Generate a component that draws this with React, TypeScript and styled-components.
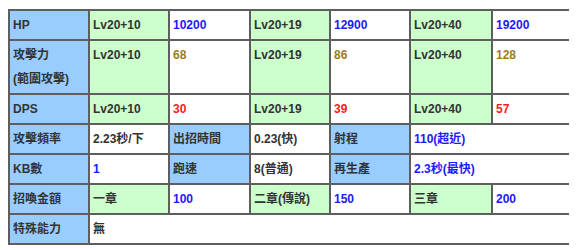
import styled, { createGlobalStyle } from "styled-components";

const GlobalStyle = createGlobalStyle`
  body {
    margin: 8px;
    background: #ffffff;
    font-family: "Liberation Sans", "Noto Sans CJK TC", sans-serif;
  }
`;

type Tone = "label" | "level" | "plain";
type Ink = "dark" | "blue" | "gold" | "red";

const backgrounds: Record<Tone, string> = {
  label: "#99ccff",
  level: "#ccffcc",
  plain: "#ffffff",
};

const inks: Record<Ink, string> = {
  dark: "#333333",
  blue: "#1a1aff",
  gold: "#9c7d1c",
  red: "#ff1a1a",
};

const rows: { tone: Tone; ink: Ink; text: string; span?: number }[][] = [
  [
    { tone: "label", ink: "dark", text: "HP" },
    { tone: "level", ink: "dark", text: "Lv20+10" },
    { tone: "plain", ink: "blue", text: "10200" },
    { tone: "level", ink: "dark", text: "Lv20+19" },
    { tone: "plain", ink: "blue", text: "12900" },
    { tone: "level", ink: "dark", text: "Lv20+40" },
    { tone: "plain", ink: "blue", text: "19200" },
  ],
  [
    { tone: "label", ink: "dark", text: "攻擊力\n(範圍攻擊)" },
    { tone: "level", ink: "dark", text: "Lv20+10" },
    { tone: "plain", ink: "gold", text: "68" },
    { tone: "level", ink: "dark", text: "Lv20+19" },
    { tone: "plain", ink: "gold", text: "86" },
    { tone: "level", ink: "dark", text: "Lv20+40" },
    { tone: "plain", ink: "gold", text: "128" },
  ],
  [
    { tone: "label", ink: "dark", text: "DPS" },
    { tone: "level", ink: "dark", text: "Lv20+10" },
    { tone: "plain", ink: "red", text: "30" },
    { tone: "level", ink: "dark", text: "Lv20+19" },
    { tone: "plain", ink: "red", text: "39" },
    { tone: "level", ink: "dark", text: "Lv20+40" },
    { tone: "plain", ink: "red", text: "57" },
  ],
  [
    { tone: "label", ink: "dark", text: "攻擊頻率" },
    { tone: "plain", ink: "dark", text: "2.23秒/下" },
    { tone: "label", ink: "dark", text: "出招時間" },
    { tone: "plain", ink: "dark", text: "0.23(快)" },
    { tone: "label", ink: "dark", text: "射程" },
    { tone: "plain", ink: "blue", text: "110(超近)", span: 2 },
  ],
  [
    { tone: "label", ink: "dark", text: "KB數" },
    { tone: "plain", ink: "blue", text: "1" },
    { tone: "label", ink: "dark", text: "跑速" },
    { tone: "plain", ink: "dark", text: "8(普通)" },
    { tone: "label", ink: "dark", text: "再生產" },
    { tone: "plain", ink: "blue", text: "2.3秒(最快)", span: 2 },
  ],
  [
    { tone: "label", ink: "dark", text: "招喚金額" },
    { tone: "level", ink: "dark", text: "一章" },
    { tone: "plain", ink: "blue", text: "100" },
    { tone: "level", ink: "dark", text: "二章(傳說)" },
    { tone: "plain", ink: "blue", text: "150" },
    { tone: "level", ink: "dark", text: "三章" },
    { tone: "plain", ink: "blue", text: "200" },
  ],
  [
    { tone: "label", ink: "dark", text: "特殊能力" },
    { tone: "plain", ink: "dark", text: "無", span: 6 },
  ],
];

const widths = [80, 80, 81, 80, 80, 82, 81];

const App = () => {
  return (
    <>
      <GlobalStyle />
      <StatsTable>
        <colgroup>
          {widths.map((w, i) => (
            <col key={i} style={{ width: w }} />
          ))}
        </colgroup>
        <tbody>
          {rows.map((row, r) => (
            <tr key={r}>
              {row.map((cell, c) => (
                <Cell key={c} $tone={cell.tone} $ink={cell.ink} colSpan={cell.span}>
                  {cell.text.split("\n").map((line, l) => (
                    <Line key={l}>{line}</Line>
                  ))}
                </Cell>
              ))}
            </tr>
          ))}
        </tbody>
      </StatsTable>
    </>
  );
};

const StatsTable = styled.table`
  width: 564px;
  margin-top: 1px;
  table-layout: fixed;
  border-collapse: collapse;
  border: 2px solid #5e5e5e;
`;

const Cell = styled.td<{ $tone: Tone; $ink: Ink }>`
  border: 2px solid #5e5e5e;
  padding: 2px 3px;
  vertical-align: top;
  font-size: 12px;
  font-weight: bold;
  line-height: 24px;
  background: ${(props) => backgrounds[props.$tone]};
  color: ${(props) => inks[props.$ink]};
`;

const Line = styled.div`
  white-space: nowrap;
`;

export default App;
